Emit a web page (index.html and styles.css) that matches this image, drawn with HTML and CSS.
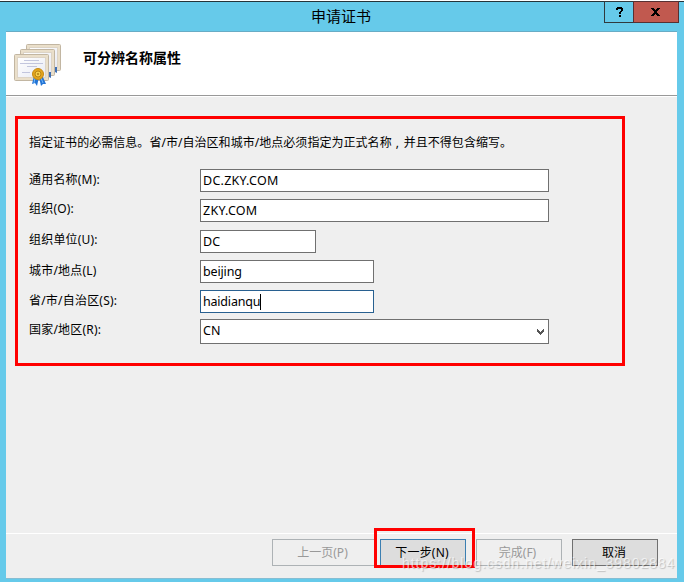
FILE: index.html
```html
<!DOCTYPE html>
<html lang="zh-CN">
<head>
<meta charset="utf-8">
<title>申请证书</title>
<link rel="stylesheet" href="styles.css">
</head>
<body>
<div class="window">
  <header class="titlebar">
    <div class="title">申请证书</div>
    <div class="controls">
      <div class="control help"><svg width="8" height="10" viewBox="0 0 8 10" shape-rendering="crispEdges"><path d="M1 0h5v1h1v3H6v1H5v2H3V5h1V4h1V2H2v1H0V1h1zM3 8h2v2H3z"/></svg></div>
      <div class="control close"><svg width="9" height="8" viewBox="0 0 9 8" shape-rendering="crispEdges"><path d="M0 0h3v1h1v1h1V1h1V0h3v1H8v1H7v1H6v2h1v1h1v1h1v1H6V7H5V6H4v1H3v1H0V7h1V6h1V5h1V3H2V2H1V1H0z"/></svg></div>
    </div>
  </header>
  <main class="client">
    <div class="banner">
      <svg class="certs" width="50" height="45" viewBox="0 0 50 45">
        <defs>
          <linearGradient id="paper" x1="0" y1="0" x2="1" y2="1"><stop offset="0" stop-color="#fff"/><stop offset="1" stop-color="#e8eaf3"/></linearGradient>
          <g id="sheet"><rect x=".5" y=".5" width="34" height="26" rx="1" fill="#eadfca" stroke="#c2b6a2"/><rect x="3.5" y="3.5" width="28" height="20" fill="url(#paper)" stroke="#ddd4c6"/></g>
        </defs>
        <use href="#sheet" x="12" y="0"/>
        <path d="m41 23 2 0 0 6-2-1z" fill="#3f6fb4"/>
        <use href="#sheet" x="6" y="5"/>
        <path d="m35 28 2 0 0 6-2-1z" fill="#3f6fb4"/>
        <use href="#sheet" x="0" y="10"/>
        <path d="M10 16.500h15M6 19.500h23M13 22.500h10M8 28.500h8" stroke="#b5b9d5" stroke-width=".8"/>
        <path d="m20 32-2 8 3-1 2 3 2-9zM25 33l2 9 2-2 3 0-4-9z" fill="#2374d5"/>
        <path d="m21 34-1 5M27 34l2 5" stroke="#73b8f7"/>
        <circle cx="24" cy="30" r="5.500" fill="#e4a51d" stroke="#c58a12"/>
        <circle cx="24" cy="30" r="3" fill="#f6cd4a" stroke="#b98514"/>
        <circle cx="24" cy="30" r="1" fill="#b17a12"/>
      </svg>
      <h1>可分辨名称属性</h1>
    </div>
    <section class="form">
      <p class="intro">指定证书的必需信息。省/市/自治区和城市/地点必须指定为正式名称<span class="comma">,</span>并且不得包含缩写。</p>
      <div class="row"><span class="label">通用名称(M):</span><div class="field upper">DC.ZKY.COM</div></div>
      <div class="row org"><span class="label">组织(O):</span><div class="field upper">ZKY.COM</div></div>
      <div class="row unit"><span class="label">组织单位(U):</span><div class="field short">DC</div></div>
      <div class="row"><span class="label">城市/地点(L)</span><div class="field medium">beijing</div></div>
      <div class="row"><span class="label">省/市/自治区(S):</span><div class="field medium focused">haidianqu<i class="caret"></i></div></div>
      <div class="row country"><span class="label">国家/地区(R):</span><div class="field select">CN<svg class="arrow" width="7" height="6" viewBox="0 0 7 6" shape-rendering="crispEdges"><path d="M0 0h1v1h1v1h1v1h1V2h1V1h1V0h1v3H6v1H5v1H4v1H3V5H2V4H1V3H0z" fill="#555"/></svg></div></div>
    </section>
    <footer class="actions">
      <div class="button disabled previous">上一页(P)</div>
      <div class="button next">下一步(N)</div>
      <div class="button disabled finish">完成(F)</div>
      <div class="button cancel">取消</div>
    </footer>
  </main>
  <div class="highlight"></div>
  <div class="watermark">https://blog.csdn.net/weixin_39802884</div>
</div>
</body>
</html>
```
FILE: styles.css
```css
* { box-sizing: border-box; }
body { margin: 0; overflow: hidden; }
.window {
  position: relative;
  display: flex;
  flex-direction: column;
  width: 684px;
  height: 582px;
  padding: 1px 7px 3px 6px;
  background: #66caea;
  color: #000;
  font: 12px/18px "Noto Sans", "Noto Sans CJK SC", sans-serif;
  box-shadow: inset 0 1px #fff, inset 0 2px #26343a;
}
.titlebar {
  display: flex;
  position: relative;
  justify-content: center;
  height: 31px;
  flex: none;
  border-bottom: 1px solid #68acc5;
}
.title { font-size: 15px; line-height: 30px; margin-right: 1px; }
.controls { position: absolute; top: 0; right: -2px; display: flex; }
.control {
  display: flex;
  align-items: center;
  justify-content: center;
  height: 22px;
  border: 1px solid #30393d;
}
.help { width: 29px; border-right: 0; padding-left: 1px; }
.close { width: 46px; padding-right: 2px; background: #c1594f; border-color: #573032; }
.client { display: flex; flex-direction: column; flex: 1; background: #efefef; border-bottom: 1px solid #86bed3; }
.banner {
  display: flex;
  height: 65px;
  flex: none;
  padding-left: 8px;
  background: #fff;
  border-bottom: 1px solid #fff;
  box-shadow: inset 0 -1px #999;
}
.certs { margin-top: 12px; flex: none; }
h1 { margin: 16px 0 0 19px; font-size: 14px; line-height: 20px; font-weight: 700; }
.form {
  width: 610px;
  height: 250px;
  flex: none;
  margin: 19px 0 0 9px;
  padding: 15px 11px;
  border: 3px solid #f00;
}
.intro { margin: 0 0 17px; white-space: nowrap; letter-spacing: .04px; }
.comma { display: inline-block; width: 12px; padding-left: 4px; }
.row { display: flex; height: 23px; margin-bottom: 7px; }
.org { margin-bottom: 8px; }
.country { height: 25px; margin-top: -1px; }
.label { width: 171px; line-height: 22px; white-space: nowrap; letter-spacing: .2px; }
.org .label, .unit .label { line-height: 20px; }
.field {
  display: flex;
  align-items: center;
  width: 349px;
  padding-left: 2px;
  background: #fff;
  border: 1px solid #707070;
  font-size: 12.500px;
}
.upper { letter-spacing: .25px; }
.short { width: 116px; }
.medium { width: 174px; letter-spacing: -.15px; }
.focused { border-color: #286090; letter-spacing: -.2px; }
.caret { width: 1px; height: 16px; background: #000; }
.select { justify-content: space-between; padding: 0 4px 1px 2px; }
.arrow { margin-top: 1px; }
.actions {
  display: flex;
  height: 45px;
  flex: none;
  margin-top: auto;
  padding: 5px 19px 0 266px;
  border-top: 1px solid #fff;
}
.button {
  width: 86px;
  height: 27px;
  flex: none;
  border: 1px solid #707070;
  background: #ddd;
  line-height: 25px;
  text-align: center;
}
.disabled { border-color: #adb2b5; background: #efefef; color: #999; }
.previous { width: 104px; padding-right: 3px; margin-right: 4px; }
.next { border-color: #3c7fb1; margin-right: 10px; padding-right: 2px; letter-spacing: .2px; }
.finish { margin-right: 10px; padding-right: 3px; }
.cancel { padding-right: 2px; }
.highlight {
  position: absolute;
  left: 374px;
  top: 528px;
  width: 101px;
  height: 40px;
  border: 3px solid #f00;
}
.watermark {
  position: absolute;
  left: 402px;
  top: 554px;
  color: rgba(255,255,255,.65);
  font: 14px/18px "Liberation Sans", sans-serif;
  letter-spacing: .95px;
  text-shadow: 1px 1px 1px rgba(0,0,0,.2);
  white-space: nowrap;
}
```
